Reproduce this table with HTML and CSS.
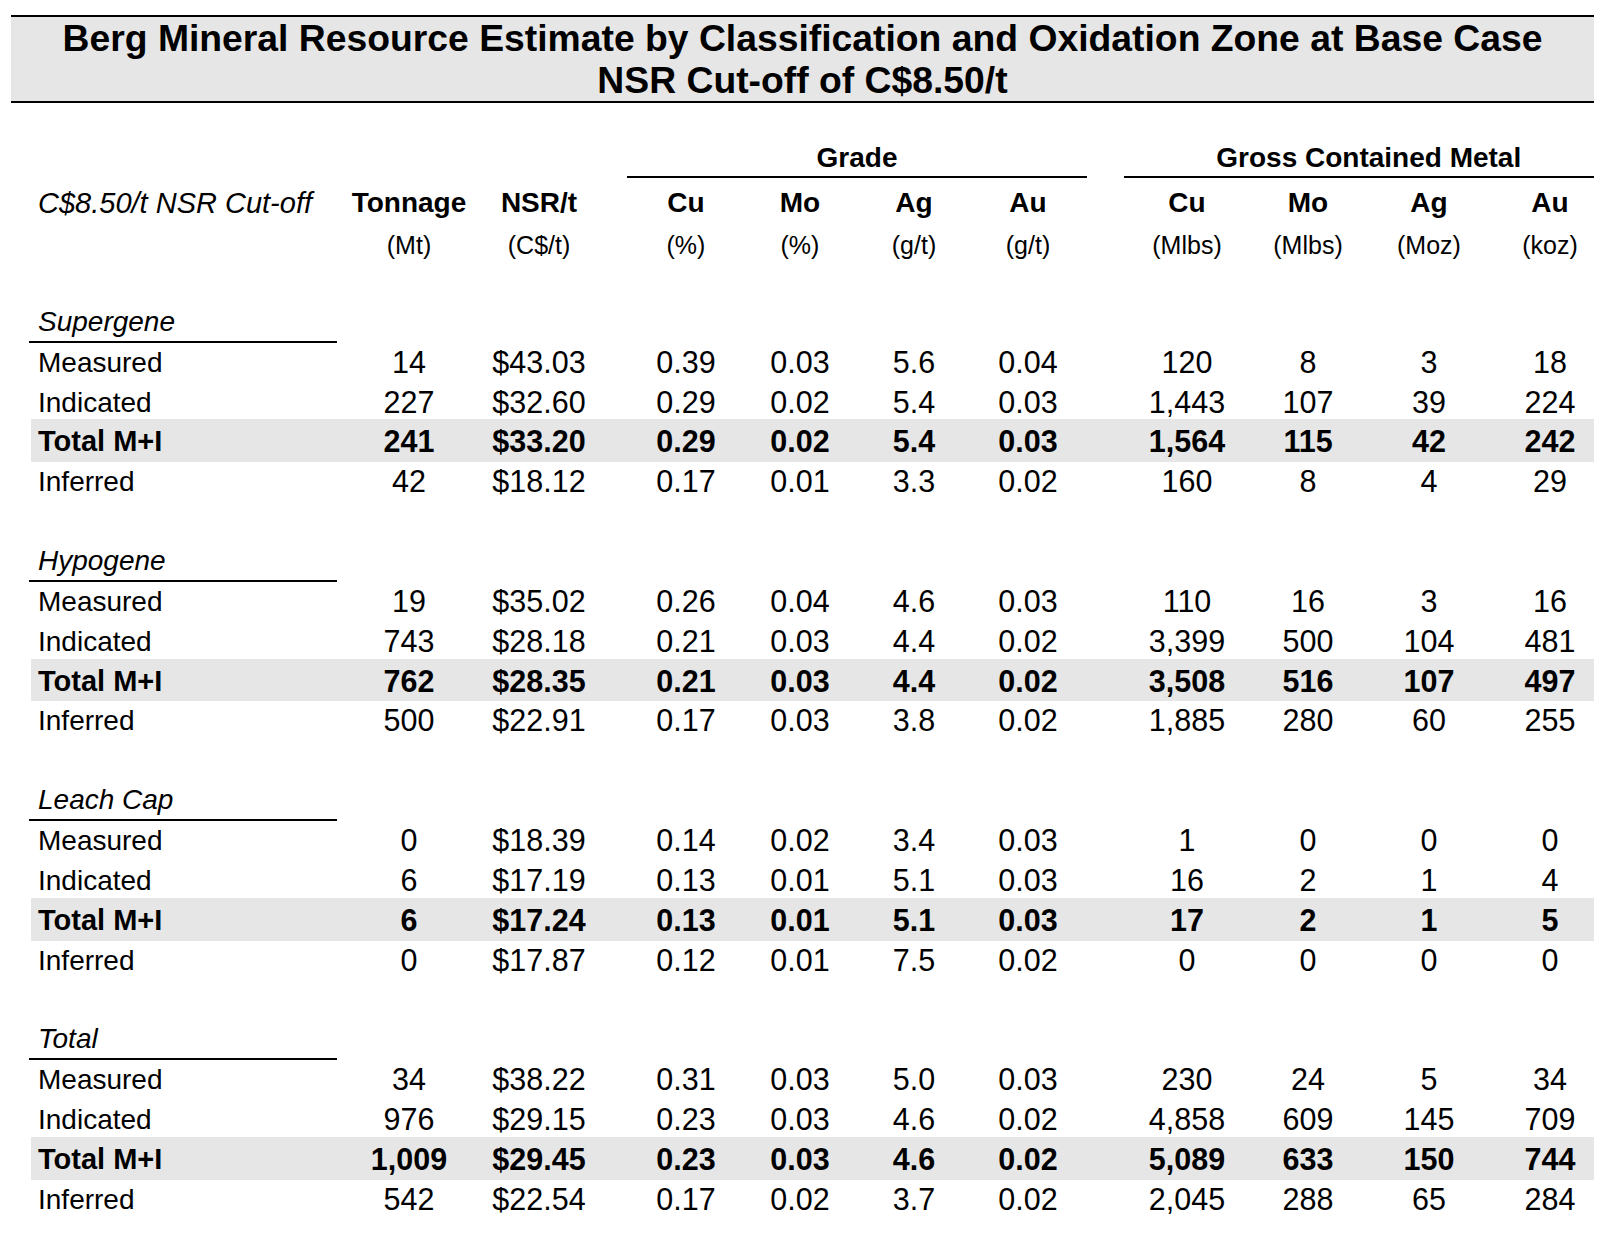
FILE: index.html
```html
<!DOCTYPE html>
<html lang="en">
<head>
<meta charset="utf-8">
<title>Berg Mineral Resource Estimate</title>
<link rel="stylesheet" href="styles.css">
</head>
<body>
<div class="title">Berg Mineral Resource Estimate by Classification and Oxidation Zone at Base Case<br>NSR Cut-off of C$8.50/t</div>
<div class="table">
  <div class="row group"><span class="grp grade">Grade</span><span class="grp metal">Gross Contained Metal</span></div>
  <div class="row cells head"><span>C$8.50/t NSR Cut-off</span><span>Tonnage</span><span>NSR/t</span><span>Cu</span><span>Mo</span><span>Ag</span><span>Au</span><span>Cu</span><span>Mo</span><span>Ag</span><span>Au</span></div>
  <div class="row cells units"><span></span><span>(Mt)</span><span>(C$/t)</span><span>(%)</span><span>(%)</span><span>(g/t)</span><span>(g/t)</span><span>(Mlbs)</span><span>(Mlbs)</span><span>(Moz)</span><span>(koz)</span></div>

  <section class="zone first">
    <div class="zone-title">Supergene</div>
    <div class="row cells data"><span>Measured</span><span>14</span><span>$43.03</span><span>0.39</span><span>0.03</span><span>5.6</span><span>0.04</span><span>120</span><span>8</span><span>3</span><span>18</span></div>
    <div class="row cells data"><span>Indicated</span><span>227</span><span>$32.60</span><span>0.29</span><span>0.02</span><span>5.4</span><span>0.03</span><span>1,443</span><span>107</span><span>39</span><span>224</span></div>
    <div class="row cells data tot"><span>Total M+I</span><span>241</span><span>$33.20</span><span>0.29</span><span>0.02</span><span>5.4</span><span>0.03</span><span>1,564</span><span>115</span><span>42</span><span>242</span></div>
    <div class="row cells data"><span>Inferred</span><span>42</span><span>$18.12</span><span>0.17</span><span>0.01</span><span>3.3</span><span>0.02</span><span>160</span><span>8</span><span>4</span><span>29</span></div>
  </section>

  <section class="zone">
    <div class="zone-title">Hypogene</div>
    <div class="row cells data"><span>Measured</span><span>19</span><span>$35.02</span><span>0.26</span><span>0.04</span><span>4.6</span><span>0.03</span><span>110</span><span>16</span><span>3</span><span>16</span></div>
    <div class="row cells data"><span>Indicated</span><span>743</span><span>$28.18</span><span>0.21</span><span>0.03</span><span>4.4</span><span>0.02</span><span>3,399</span><span>500</span><span>104</span><span>481</span></div>
    <div class="row cells data tot"><span>Total M+I</span><span>762</span><span>$28.35</span><span>0.21</span><span>0.03</span><span>4.4</span><span>0.02</span><span>3,508</span><span>516</span><span>107</span><span>497</span></div>
    <div class="row cells data"><span>Inferred</span><span>500</span><span>$22.91</span><span>0.17</span><span>0.03</span><span>3.8</span><span>0.02</span><span>1,885</span><span>280</span><span>60</span><span>255</span></div>
  </section>

  <section class="zone">
    <div class="zone-title">Leach Cap</div>
    <div class="row cells data"><span>Measured</span><span>0</span><span>$18.39</span><span>0.14</span><span>0.02</span><span>3.4</span><span>0.03</span><span>1</span><span>0</span><span>0</span><span>0</span></div>
    <div class="row cells data"><span>Indicated</span><span>6</span><span>$17.19</span><span>0.13</span><span>0.01</span><span>5.1</span><span>0.03</span><span>16</span><span>2</span><span>1</span><span>4</span></div>
    <div class="row cells data tot"><span>Total M+I</span><span>6</span><span>$17.24</span><span>0.13</span><span>0.01</span><span>5.1</span><span>0.03</span><span>17</span><span>2</span><span>1</span><span>5</span></div>
    <div class="row cells data"><span>Inferred</span><span>0</span><span>$17.87</span><span>0.12</span><span>0.01</span><span>7.5</span><span>0.02</span><span>0</span><span>0</span><span>0</span><span>0</span></div>
  </section>

  <section class="zone">
    <div class="zone-title">Total</div>
    <div class="row cells data"><span>Measured</span><span>34</span><span>$38.22</span><span>0.31</span><span>0.03</span><span>5.0</span><span>0.03</span><span>230</span><span>24</span><span>5</span><span>34</span></div>
    <div class="row cells data"><span>Indicated</span><span>976</span><span>$29.15</span><span>0.23</span><span>0.03</span><span>4.6</span><span>0.02</span><span>4,858</span><span>609</span><span>145</span><span>709</span></div>
    <div class="row cells data tot"><span>Total M+I</span><span>1,009</span><span>$29.45</span><span>0.23</span><span>0.03</span><span>4.6</span><span>0.02</span><span>5,089</span><span>633</span><span>150</span><span>744</span></div>
    <div class="row cells data"><span>Inferred</span><span>542</span><span>$22.54</span><span>0.17</span><span>0.02</span><span>3.7</span><span>0.02</span><span>2,045</span><span>288</span><span>65</span><span>284</span></div>
  </section>
</div>
</body>
</html>
```

FILE: styles.css
```css
body {
  margin: 0;
  padding-top: 15px;
  font-family: "Liberation Sans", Arial, sans-serif;
  color: #000;
  background: #fff;
}

.title {
  margin-left: 11px;
  width: 1583px;
  height: 88px;
  box-sizing: border-box;
  border-top: 2px solid #000;
  border-bottom: 2px solid #000;
  background: #e6e6e6;
  padding-top: 1px;
  font-weight: bold;
  font-size: 37.3px;
  line-height: 41.5px;
  text-align: center;
}

.table {
  margin: 36.65px 0 0 29px;
  width: 1565px;
  font-size: 28px;
}

.row {
  display: grid;
  grid-template-columns: 315px 130px 130px 139px 114px 114px 114px 162.5px 121px 121px 104.5px;
  height: 39.86px;
  line-height: 39.86px;
}

.row > * {
  text-align: center;
  white-space: nowrap;
  box-sizing: border-box;
}

.cells > :nth-child(1) { text-align: left; padding-left: 9px; }
.cells > :nth-child(4) { padding-left: 25px; }
.cells > :nth-child(8) { padding-left: 41.5px; }
.cells > :nth-child(11) { padding-left: 16.5px; }

.data > :not(:first-child) {
  font-size: 30.5px;
}

.group {
  height: 38px;
  line-height: 36px;
  font-weight: bold;
}

.grp {
  border-bottom: 2px solid #000;
}

.grade {
  grid-column: 4 / 8;
  margin-left: 23px;
  margin-right: -2px;
}

.metal {
  grid-column: 8 / 12;
  margin-left: 39px;
  padding-left: 19.5px;
}

.head {
  margin-top: 5.2px;
  height: 40px;
  line-height: 40px;
  font-weight: bold;
}

.head > :first-child {
  font-style: italic;
  font-weight: normal;
  font-size: 29px;
}

.units {
  height: 44px;
  line-height: 44px;
  font-size: 25px;
}

.zone {
  margin-top: 39.86px;
}

.zone.first {
  margin-top: 36.05px;
}

.zone-title {
  width: 308px;
  height: 39.86px;
  box-sizing: border-box;
  border-bottom: 2px solid #000;
  padding: 1px 0 0 9px;
  line-height: 36.86px;
  font-style: italic;
}

.tot {
  font-weight: bold;
  margin-top: -3px;
  padding-top: 3px;
  background: linear-gradient(#e6e6e6, #e6e6e6) 2px 0 / calc(100% - 2px) 100% no-repeat;
}

.tot > :first-child {
  font-size: 29px;
}
```
